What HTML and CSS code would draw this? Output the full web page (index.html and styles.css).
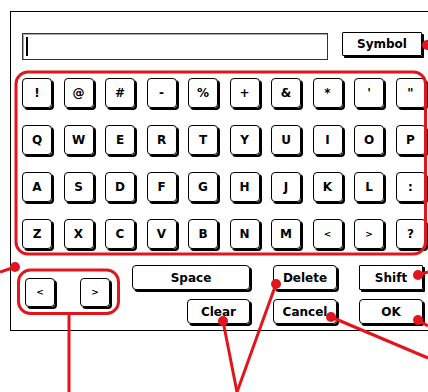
FILE: index.html
```html
<!DOCTYPE html>
<html>
<head>
<meta charset="utf-8">
<link rel="stylesheet" href="styles.css">
</head>
<body>
<div class="frame">
  <div class="top-row">
    <div class="field"><span class="cursor"></span></div>
    <div class="btn btn-square btn-symbol">Symbol</div>
  </div>
  <div class="keyboard">
    <div class="key">!</div><div class="key">@</div><div class="key">#</div><div class="key">-</div><div class="key">%</div><div class="key">+</div><div class="key">&amp;</div><div class="key">*</div><div class="key">'</div><div class="key">"</div>
    <div class="key">Q</div><div class="key">W</div><div class="key">E</div><div class="key">R</div><div class="key">T</div><div class="key">Y</div><div class="key">U</div><div class="key">I</div><div class="key">O</div><div class="key">P</div>
    <div class="key">A</div><div class="key">S</div><div class="key">D</div><div class="key">F</div><div class="key">G</div><div class="key">H</div><div class="key">J</div><div class="key">K</div><div class="key">L</div><div class="key">:</div>
    <div class="key">Z</div><div class="key">X</div><div class="key">C</div><div class="key">V</div><div class="key">B</div><div class="key">N</div><div class="key">M</div><div class="key key-small">&lt;</div><div class="key key-small">&gt;</div><div class="key">?</div>
  </div>
  <div class="bottom">
    <div class="arrows">
      <div class="key key-arrow key-small">&lt;</div>
      <div class="key key-arrow key-small">&gt;</div>
    </div>
    <div class="actions">
      <div class="btn btn-space">Space</div>
      <div class="btn btn-delete">Delete</div>
      <div class="btn btn-square btn-shift">Shift</div>
      <div class="btn btn-clear">Clear</div>
      <div class="btn btn-cancel">Cancel</div>
      <div class="btn btn-ok">OK</div>
    </div>
  </div>
</div>
<svg class="annotations" width="428" height="392" viewBox="0 0 428 392">
  <g fill="none" stroke="#e3151c" stroke-width="3">
    <rect x="16" y="72" width="409.5" height="182" rx="12" ry="12"/>
    <rect x="18.5" y="270" width="100" height="43.5" rx="12" ry="12"/>
    <line x1="69" y1="313" x2="69" y2="392"/>
    <line x1="15" y1="267" x2="0" y2="272"/>
    <line x1="276" y1="284" x2="237" y2="392"/>
    <line x1="223" y1="321" x2="237" y2="392"/>
    <line x1="331" y1="317" x2="428" y2="358"/>
    <line x1="418" y1="275" x2="428" y2="272"/>
    <line x1="418" y1="320" x2="428" y2="326"/>
  </g>
  <g fill="#e3151c">
    <circle cx="15" cy="267" r="5"/>
    <circle cx="427" cy="45" r="5"/>
    <circle cx="418" cy="275" r="5"/>
    <circle cx="418" cy="320" r="5"/>
    <circle cx="331" cy="317" r="5"/>
    <circle cx="276" cy="284" r="5"/>
    <circle cx="223" cy="321" r="5"/>
  </g>
</svg>
</body>
</html>
```

FILE: styles.css
```css
html, body {
  margin: 0;
  padding: 0;
}
body {
  width: 428px;
  height: 392px;
  overflow: hidden;
  background: #fff;
  position: relative;
  font-family: "DejaVu Sans", "Liberation Sans", sans-serif;
  font-weight: bold;
  font-size: 12px;
  color: #000;
}
.frame {
  box-sizing: border-box;
  margin: 11px 0 0 10px;
  width: 418px;
  height: 320px;
  border: 1px solid #000;
  border-right: none;
  padding: 21px 0 0 11px;
}
.top-row {
  display: flex;
  align-items: flex-start;
}
.field {
  box-sizing: border-box;
  width: 306px;
  height: 27px;
  border: 1px solid #333;
  box-shadow: inset 1px 1px 0 #aaa;
  display: flex;
  align-items: center;
  padding-left: 3px;
}
.cursor {
  width: 2px;
  height: 19px;
  background: #000;
}
.btn {
  box-sizing: border-box;
  border: 1px solid #000;
  border-radius: 4px;
  box-shadow: 2px 2px 0 #000;
  display: flex;
  align-items: center;
  justify-content: center;
  height: 25px;
  line-height: 1;
}
.btn-square {
  border-radius: 1px;
}
.btn-symbol {
  margin-left: 14px;
  margin-top: -1px;
  width: 80px;
  height: 24px;
}
.keyboard {
  margin-top: 18px;
  display: grid;
  grid-template-columns: repeat(10, 30px);
  grid-auto-rows: 30px;
  column-gap: 11.5px;
  row-gap: 17px;
}
.key {
  box-sizing: border-box;
  width: 30px;
  height: 30px;
  border: 1px solid #000;
  border-radius: 4px;
  box-shadow: 2px 2px 0 #000;
  display: flex;
  align-items: center;
  justify-content: center;
  line-height: 1;
}
.key-small {
  font-size: 9px;
}
.bottom {
  margin-top: 16px;
  display: flex;
  align-items: flex-start;
}
.arrows {
  display: flex;
  gap: 25px;
  margin-left: 3px;
  margin-top: 13px;
}
.key-arrow {
  height: 29px;
}
.actions {
  margin-left: 22px;
  display: grid;
  grid-template-columns: 118px 64px 63px;
  grid-auto-rows: 25px;
  column-gap: 23px;
  row-gap: 9px;
}
.actions .btn-shift {
  margin-left: -1px;
}
.btn-clear {
  width: 63px;
  justify-self: end;
}
.btn-ok {
  margin-left: -1px;
}
.annotations {
  position: absolute;
  left: 0;
  top: 0;
  pointer-events: none;
}
```
